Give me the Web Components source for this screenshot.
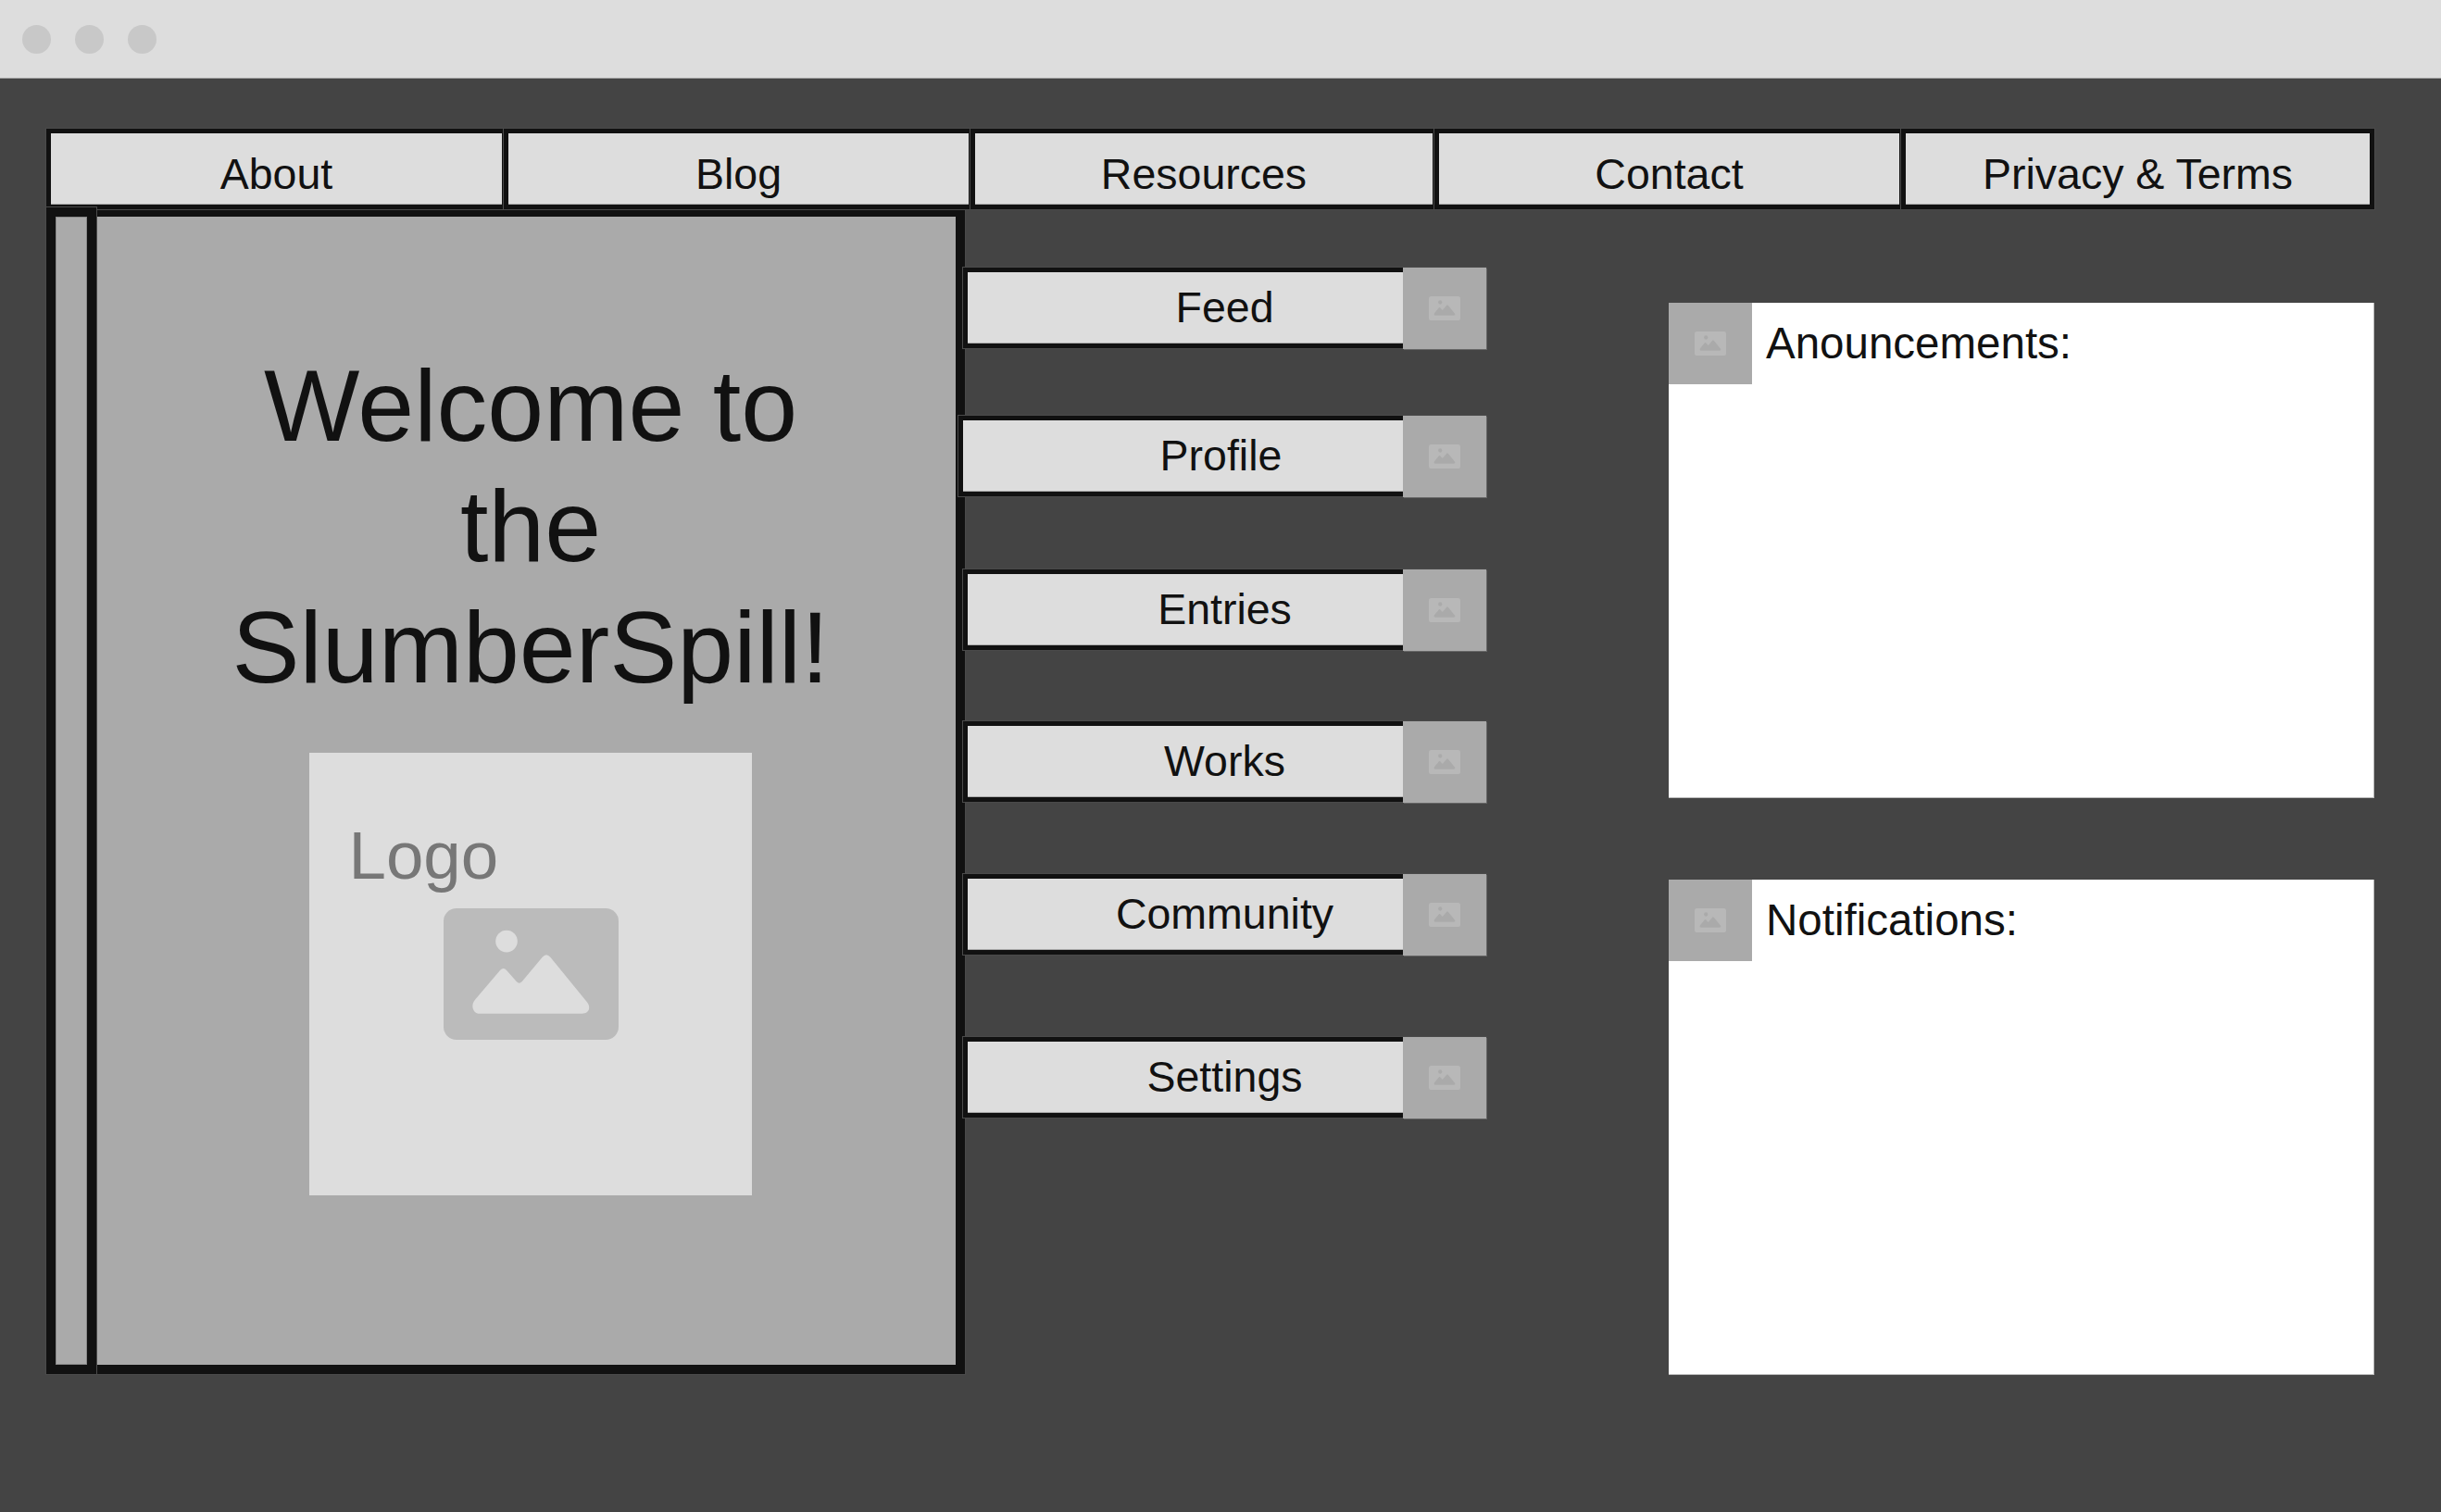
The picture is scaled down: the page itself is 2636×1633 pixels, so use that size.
<!DOCTYPE html>
<html lang="en">
<head>
<meta charset="utf-8">
<title>SlumberSpill</title>
<style>
  html, body { margin: 0; padding: 0; background: #444; }
  body { min-height: 100vh; font-family: "Liberation Sans", Arial, sans-serif; color: #111; }
</style>
</head>
<body>
<app-window>
  <top-nav>
    <nav-item style="--w:497px">About</nav-item>
    <nav-item style="--w:507px">Blog</nav-item>
    <nav-item style="--w:504px">Resources</nav-item>
    <nav-item style="--w:507px">Contact</nav-item>
    <nav-item style="--w:511px">Privacy &amp; Terms</nav-item>
  </top-nav>
  <page-row>
    <side-strip></side-strip>
    <hero-panel>
      <span slot="title">Welcome to the SlumberSpill!</span>
      <logo-card>Logo</logo-card>
    </hero-panel>
    <menu-list>
      <menu-row style="--top:63px">Feed</menu-row>
      <menu-row style="--top:72px" wide>Profile</menu-row>
      <menu-row style="--top:78px">Entries</menu-row>
      <menu-row style="--top:76px">Works</menu-row>
      <menu-row style="--top:77px">Community</menu-row>
      <menu-row style="--top:88px">Settings</menu-row>
    </menu-list>
    <panel-column>
      <info-panel>Anouncements:</info-panel>
      <info-panel>Notifications:</info-panel>
    </panel-column>
  </page-row>
</app-window>

<script>
function define(name, css, html) {
  customElements.define(name, class extends HTMLElement {
    constructor() {
      super();
      this.attachShadow({ mode: 'open' }).innerHTML = '<style>' + css + '</style>' + html;
    }
  });
}

define('image-icon', `
  :host { display: block; width: var(--iw, 34px); height: var(--ih, 26px); }
  svg { display: block; width: 100%; height: 100%; }
`, `<svg viewBox="0 0 189 142" preserveAspectRatio="none" aria-hidden="true">
  <rect width="189" height="142" rx="14" fill="var(--ic, #b8b8b8)"/>
  <circle cx="68" cy="35.6" r="11.8" fill="var(--hole, #aaa)"/>
  <path d="M39 113.7 C32 113.7 28.5 105 34.2 98.6 L61 66.9 Q64.6 63 68.1 66.9 L78.9 79.3 Q81.7 82.2 84.6 79.3 L106.7 52.8 Q111 47.5 115.3 52.8 L154.9 101.3 C160 108 156 113.7 149.5 113.7 Z" fill="var(--hole, #aaa)"/>
</svg>`);

define('image-box', `
  :host { display: flex; align-items: center; justify-content: center; background: #aaa; box-shadow: 1px 1px 0 #666; }
`, `<image-icon></image-icon>`);

define('app-window', `
  :host { display: block; }
  .bar { height: 84px; border-bottom: 1px solid #999; background: #ddd; box-sizing: content-box;
         display: flex; align-items: center; gap: 26px; padding-left: 24px; }
  .dot { width: 31px; height: 31px; border-radius: 50%; background: #c8c8c8; }
  .content { padding: 54px 72px 0 50px; }
`, `<div class="bar"><span class="dot"></span><span class="dot"></span><span class="dot"></span></div>
<div class="content"><slot></slot></div>`);

define('top-nav', `:host { display: flex; height: 87px; position: relative; z-index: 1; }`, `<slot></slot>`);

define('nav-item', `
  :host { display: flex; align-items: center; justify-content: center; box-sizing: border-box;
          flex: 0 0 var(--w); height: 87px; border: 5px solid #111; background: #ddd;
          padding-top: 11px; margin-left: -3px; font-size: 46.5px; color: #111;
          box-shadow: 0 0 0 1px #4a4a4a, inset 0 -1px 0 #aaa; }
  :host(:first-child) { margin-left: 0; }
`, `<slot></slot>`);

define('page-row', `:host { display: flex; align-items: flex-start; height: 1258px; }`, `<slot></slot>`);

define('side-strip', `
  :host { display: block; box-sizing: border-box; width: 54px; height: 1260px; margin-top: -2px;
          border: 10px solid #111; background: #aaa; flex: none; position: relative; z-index: 2;
          box-shadow: 0 0 0 1px #4a4a4a, inset 0 0 0 1px #888; }
`, ``);

define('hero-panel', `
  :host { display: flex; flex-direction: column; align-items: center; box-sizing: border-box; flex: none;
          width: 938px; height: 1258px; background: #aaa; border: solid #111; border-width: 8px 10px 10px 0;
          padding: 139px 0 0 10px; box-shadow: 1px 1px 0 #4a4a4a; }
  .title { width: 700px; text-align: center; font-size: 109.5px; line-height: 130.4px; color: #111; margin-bottom: 49px; }
`, `<div class="title"><slot name="title"></slot></div><slot></slot>`);

define('logo-card', `
  :host { display: block; box-sizing: border-box; width: 478px; height: 478px; background: #ddd; padding-top: 69px; flex: none; }
  .label { display: block; padding-left: 42.5px; font-size: 72.7px; color: #777; margin-bottom: 15.5px; }
  image-icon { --iw: 189px; --ih: 142px; --ic: #bbb; --hole: #ddd; margin: 0 auto; }
`, `<span class="label"><slot></slot></span><image-icon></image-icon>`);

define('menu-list', `
  :host { display: flex; flex-direction: column; align-items: flex-end; width: 565px; margin-left: -2px; flex: none; }
`, `<slot></slot>`);

define('menu-row', `
  :host { display: grid; grid-template-columns: 1fr 90px; height: 88px; width: 565px; flex: none; margin-top: var(--top, 0); font-size: 46.5px; }
  :host([wide]) { width: 570px; }
  :host([wide]) .btn { padding-right: 3px; }
  .btn { grid-area: 1 / 1 / 2 / 3; box-sizing: border-box; height: 87px; border: 5px solid #111; background: #ddd;
         padding-bottom: 1px; display: flex; align-items: center; justify-content: center; color: #111;
         box-shadow: 0 0 0 1px #4a4a4a, inset 0 -1px 0 #aaa; }
  image-box { grid-area: 1 / 2 / 2 / 3; }
`, `<div class="btn"><slot></slot></div><image-box></image-box>`);

define('panel-column', `
  :host { display: flex; flex-direction: column; gap: 88px; width: 762px; margin-left: 197px; padding-top: 101px; flex: none; }
`, `<slot></slot>`);

define('info-panel', `
  :host { display: block; height: 535px; background: #fff; box-shadow: inset -1px -1px 0 #bbb; font-size: 47.5px; color: #111; }
  .head { display: flex; align-items: center; height: 88px; gap: 15px; }
  .head span { padding-bottom: 2px; }
  image-box { width: 90px; height: 88px; flex: none; box-shadow: none; }
`, `<div class="head"><image-box></image-box><span><slot></slot></span></div>`);
</script>
</body>
</html>
